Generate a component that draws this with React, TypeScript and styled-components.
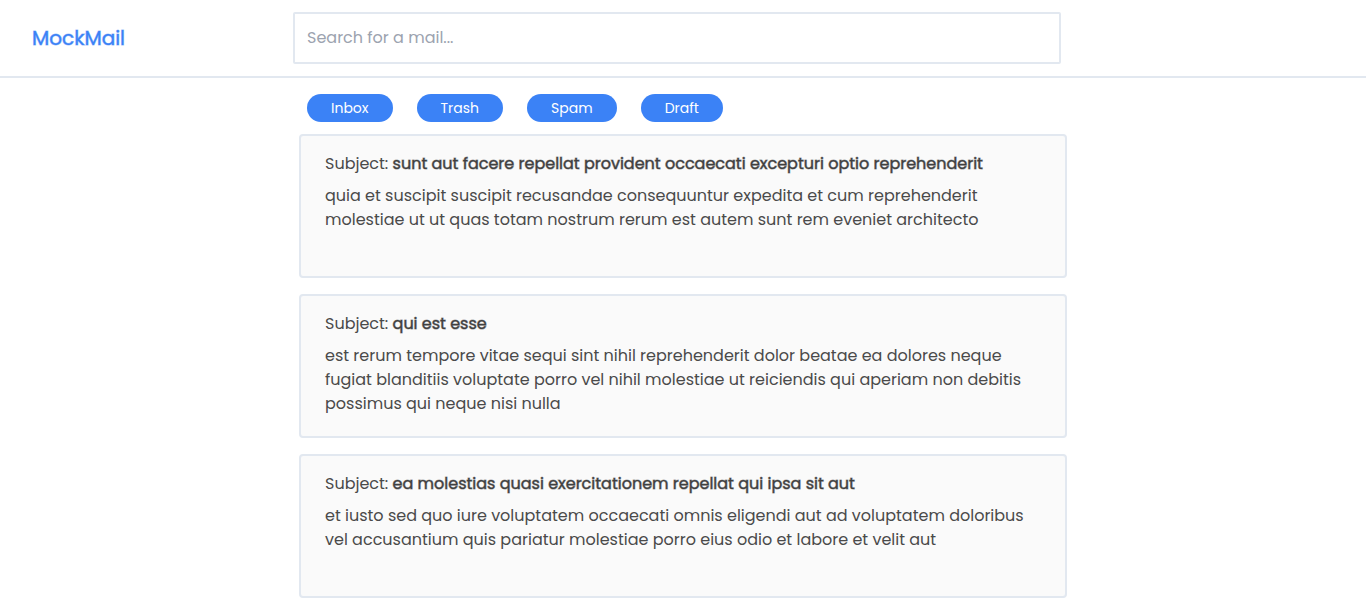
import React, { useState } from "react";
import styled, { createGlobalStyle, css } from "styled-components";

const GlobalStyle = createGlobalStyle`
  *, *::before, *::after { box-sizing: border-box; }
  body {
    margin: 0;
    background: #ffffff;
    color: #4a4a4a;
    font-family: Poppins, Inter, "Liberation Sans", sans-serif;
    font-size: 16px;
    line-height: 24px;
  }
`;

/* Bold built from the regular weight, which keeps the regular letter widths. */
const emboldened = css`
  font-weight: 400;
  -webkit-text-stroke: 1px color-mix(in srgb, currentColor 50%, transparent);
`;

const Header = styled.header`
  display: grid;
  grid-template-columns: 1fr minmax(0, 768px) 1fr;
  align-items: center;
  padding: 12px 44px 12px 32px;
  border-bottom: 2px solid #e2e8f0;
`;

const Logo = styled.a`
  ${emboldened}
  color: #3b82f6;
  font-size: 20px;
  line-height: 28px;
  text-decoration: none;
`;

const Search = styled.input`
  width: 100%;
  height: 52px;
  padding: 11px 12px 13px;
  border: 2px solid #e2e8f0;
  border-radius: 2px;
  background: #ffffff;
  color: #404040;
  font: inherit;
  &::placeholder {
    color: #9ca3af;
    opacity: 1;
  }
`;

const Main = styled.main`
  max-width: 768px;
  margin: 0 auto;
  padding-top: 16px;
`;

const Folders = styled.nav`
  display: flex;
  gap: 24px;
  padding: 0 8px 12px;
`;

const FolderButton = styled.button`
  padding: 4px 24px;
  border: 0;
  border-radius: 14px;
  background: #3b82f6;
  color: #ffffff;
  font: inherit;
  font-size: 14px;
  line-height: 20px;
  cursor: pointer;
`;

const MailList = styled.div`
  display: flex;
  flex-direction: column;
  gap: 16px;
`;

const MailCard = styled.article`
  min-height: 144px;
  padding: 16px 24px;
  border: 2px solid #e2e8f0;
  border-radius: 4px;
  background: #fafafa;
`;

const Subject = styled.h2`
  margin: 0 0 8px;
  font-size: 16px;
  font-weight: 400;
  line-height: 24px;
`;

const Title = styled.strong`
  ${emboldened}
  color: #404040;
`;

const Body = styled.p`
  margin: 0;
`;

const folders = ["Inbox", "Trash", "Spam", "Draft"];

const mails = [
  {
    title: "sunt aut facere repellat provident occaecati excepturi optio reprehenderit",
    body: "quia et suscipit suscipit recusandae consequuntur expedita et cum reprehenderit molestiae ut ut quas totam nostrum rerum est autem sunt rem eveniet architecto",
  },
  {
    title: "qui est esse",
    body: "est rerum tempore vitae sequi sint nihil reprehenderit dolor beatae ea dolores neque fugiat blanditiis voluptate porro vel nihil molestiae ut reiciendis qui aperiam non debitis possimus qui neque nisi nulla",
  },
  {
    title: "ea molestias quasi exercitationem repellat qui ipsa sit aut",
    body: "et iusto sed quo iure voluptatem occaecati omnis eligendi aut ad voluptatem doloribus vel accusantium quis pariatur molestiae porro eius odio et labore et velit aut",
  },
];

export default function App() {
  const [query, setQuery] = useState("");
  return (
    <>
      <GlobalStyle />
      <Header>
        <Logo href="#">MockMail</Logo>
        <Search
          type="text"
          aria-label="Search for a mail"
          placeholder="Search for a mail..."
          value={query}
          onChange={(e) => setQuery(e.target.value)}
        />
      </Header>
      <Main>
        <Folders aria-label="Folders">
          {folders.map((name) => (
            <FolderButton key={name} type="button">{name}</FolderButton>
          ))}
        </Folders>
        <MailList>
          {mails.map((mail) => (
            <MailCard key={mail.title}>
              <Subject>
                Subject: <Title>{mail.title}</Title>
              </Subject>
              <Body>{mail.body}</Body>
            </MailCard>
          ))}
        </MailList>
      </Main>
    </>
  );
}
